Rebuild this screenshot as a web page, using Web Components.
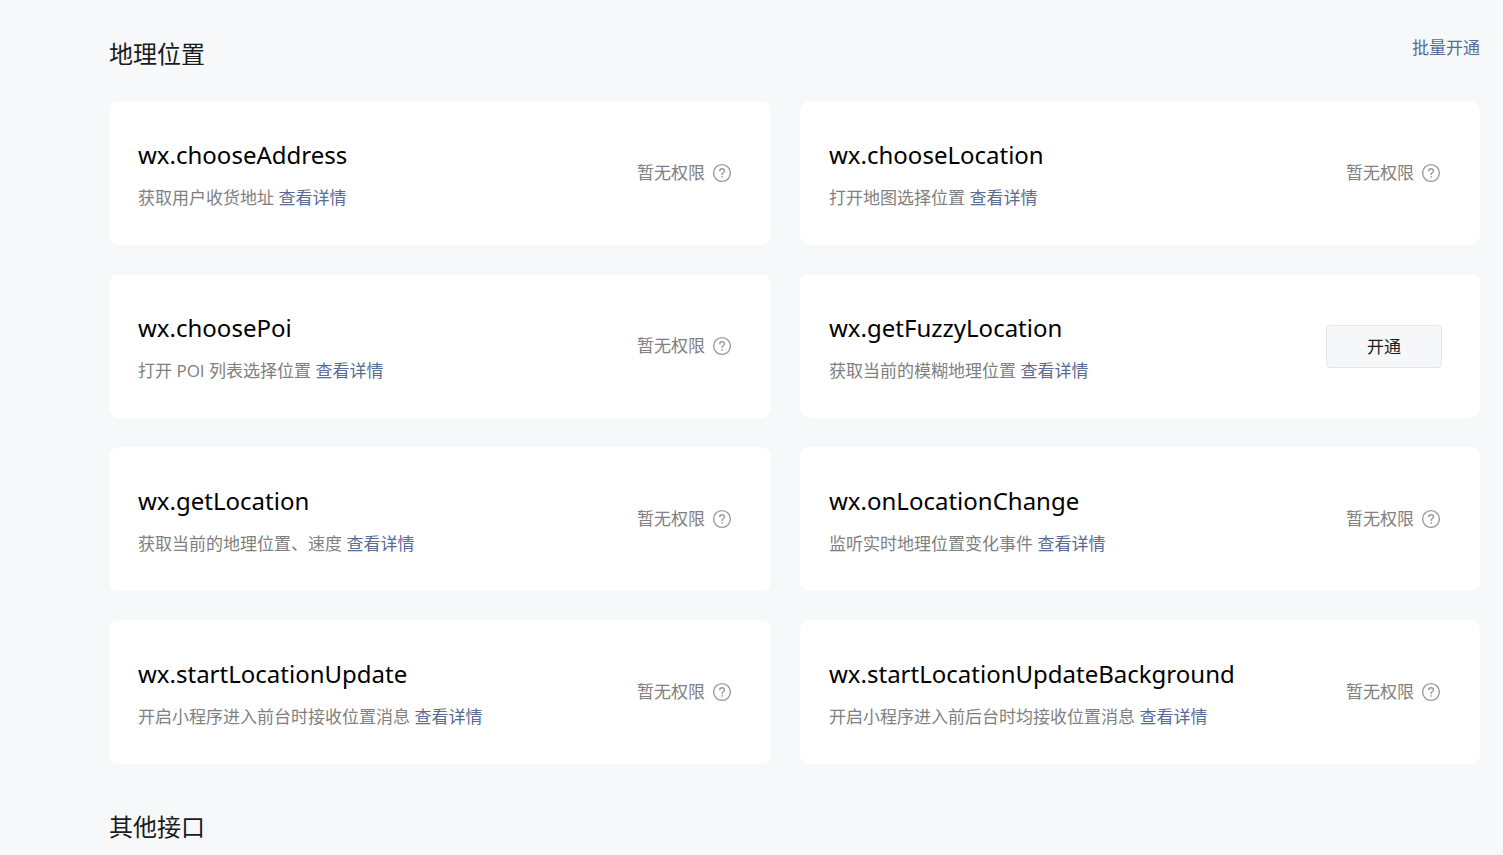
<!DOCTYPE html>
<html lang="zh-CN">
<head>
  <meta charset="UTF-8">
  <meta name="viewport" content="width=device-width, initial-scale=1.0">
  <title>接口设置</title>
  <style>
    :root {
      --link: #576b95;
      --muted: #808080;
    }
    body {
      margin: 0;
      padding: 36px 23px 0 109px;
      background: #f7f8fa;
      color: #1a1b1c;
      font-family: "Open Sans", "Noto Sans CJK SC", sans-serif;
      font-size: 17px;
      line-height: 24px;
    }
  </style>
</head>
<body>
  <api-section heading="地理位置" action="批量开通">
    <api-card name="wx.chooseAddress">获取用户收货地址</api-card>
    <api-card name="wx.chooseLocation">打开地图选择位置</api-card>
    <api-card name="wx.choosePoi">打开 POI 列表选择位置</api-card>
    <api-card name="wx.getFuzzyLocation" available>获取当前的模糊地理位置</api-card>
    <api-card name="wx.getLocation">获取当前的地理位置、速度</api-card>
    <api-card name="wx.onLocationChange">监听实时地理位置变化事件</api-card>
    <api-card name="wx.startLocationUpdate">开启小程序进入前台时接收位置消息</api-card>
    <api-card name="wx.startLocationUpdateBackground">开启小程序进入前后台时均接收位置消息</api-card>
  </api-section>
  <api-section heading="其他接口"></api-section>

  <script>
    class HelpIcon extends HTMLElement {
      constructor() {
        super();
        this.attachShadow({ mode: 'open' });
      }

      connectedCallback() {
        this.shadowRoot.innerHTML = `
          <style>
            :host {
              display: block;
              width: 22px;
              height: 22px;
              color: #9a9a9a;
            }
            svg {
              display: block;
            }
          </style>
          <svg width="22" height="22" viewBox="0 0 22 22" fill="none" stroke="currentColor" aria-hidden="true">
            <circle cx="11" cy="11" r="8.4" stroke-width="1.4"/>
            <path d="M8.7 9.2c0-1.5 1-2.4 2.4-2.4s2.3.9 2.3 2.1c0 1-.6 1.4-1.3 1.9-.8.6-1 .9-1 1.7v.4" stroke-width="1.4"/>
            <circle cx="11.1" cy="14.8" r=".9" fill="currentColor" stroke="none"/>
          </svg>
        `;
      }
    }

    class ApiCard extends HTMLElement {
      constructor() {
        super();
        this.attachShadow({ mode: 'open' });
      }

      connectedCallback() {
        const name = this.getAttribute('name');
        const status = this.hasAttribute('available')
          ? '<button type="button">开通</button>'
          : '<span class="status">暂无权限<help-icon></help-icon></span>';

        this.shadowRoot.innerHTML = `
          <style>
            :host {
              display: flex;
              align-items: center;
              justify-content: space-between;
              gap: 24px;
              padding: 0 38px 0 29px;
              border-radius: 10px;
              background: #fff;
            }
            .info {
              padding: 36px 0 35px;
            }
            h3 {
              margin: 0 0 13px;
              color: #000;
              font-family: "Noto Sans", "Noto Sans CJK SC", sans-serif;
              font-size: 24px;
              font-weight: 400;
              line-height: 36px;
            }
            p {
              margin: 0;
              color: var(--muted);
            }
            a {
              color: var(--link);
              text-decoration: none;
            }
            .status {
              display: flex;
              align-items: center;
              gap: 6px;
              flex-shrink: 0;
              color: var(--muted);
            }
            button {
              flex-shrink: 0;
              min-width: 116px;
              padding: 9px 24px 8px;
              border: 1px solid #e4e6e8;
              border-radius: 4px;
              background: #f6f7f9;
              color: #1a1b1c;
              font: inherit;
              cursor: pointer;
            }
          </style>
          <div class="info">
            <h3>${name}</h3>
            <p><slot></slot> <a href="#${name}">查看详情</a></p>
          </div>
          ${status}
        `;
      }
    }

    class ApiSection extends HTMLElement {
      constructor() {
        super();
        this.attachShadow({ mode: 'open' });
      }

      connectedCallback() {
        const action = this.getAttribute('action');

        this.shadowRoot.innerHTML = `
          <style>
            :host {
              display: block;
              margin-bottom: 45px;
            }
            :host(:last-of-type) {
              margin-bottom: 0;
            }
            header {
              display: flex;
              align-items: flex-start;
              justify-content: space-between;
            }
            h2 {
              margin: 0;
              font-size: 24px;
              font-weight: 400;
              line-height: 36px;
            }
            a {
              color: var(--link);
              text-decoration: none;
            }
            .grid {
              display: grid;
              grid-template-columns: 662fr 680fr;
              gap: 29px;
              margin-top: 29px;
            }
            .grid.empty {
              display: none;
            }
          </style>
          <header>
            <h2>${this.getAttribute('heading')}</h2>
            ${action ? `<a href="#open-all">${action}</a>` : ''}
          </header>
          <div class="grid ${this.children.length ? '' : 'empty'}"><slot></slot></div>
        `;
      }
    }

    customElements.define('help-icon', HelpIcon);
    customElements.define('api-card', ApiCard);
    customElements.define('api-section', ApiSection);
  </script>
</body>
</html>
